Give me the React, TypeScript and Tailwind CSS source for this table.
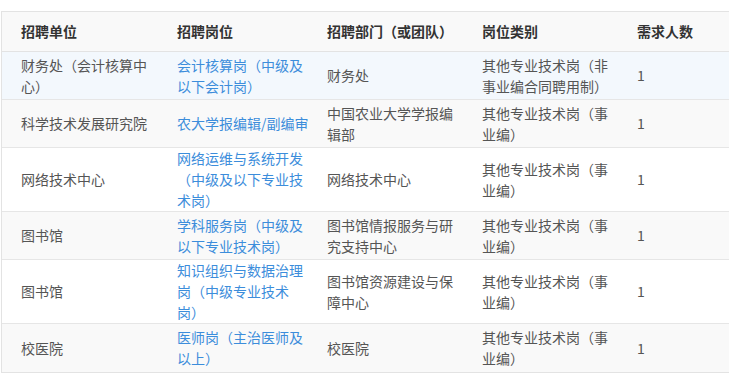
import React from 'react';

interface Job {
    unit: string;
    post: string;
    dept: string;
    kind: string;
    count: string;
    bg: string;
}

const jobs: Job[] = [
    { unit: '财务处（会计核算中心）', post: '会计核算岗（中级及以下会计岗）', dept: '财务处', kind: '其他专业技术岗（非事业编合同聘用制）', count: '1', bg: 'bg-[#f3f8fd]' },
    { unit: '科学技术发展研究院', post: '农大学报编辑/副编审', dept: '中国农业大学学报编辑部', kind: '其他专业技术岗（事业编）', count: '1', bg: 'bg-[#f9f9f9]' },
    { unit: '网络技术中心', post: '网络运维与系统开发（中级及以下专业技术岗）', dept: '网络技术中心', kind: '其他专业技术岗（事业编）', count: '1', bg: 'bg-white' },
    { unit: '图书馆', post: '学科服务岗（中级及以下专业技术岗）', dept: '图书馆情报服务与研究支持中心', kind: '其他专业技术岗（事业编）', count: '1', bg: 'bg-[#f9f9f9]' },
    { unit: '图书馆', post: '知识组织与数据治理岗（中级专业技术岗）', dept: '图书馆资源建设与保障中心', kind: '其他专业技术岗（事业编）', count: '1', bg: 'bg-white' },
    { unit: '校医院', post: '医师岗（主治医师及以上）', dept: '校医院', kind: '其他专业技术岗（事业编）', count: '1', bg: 'bg-[#f9f9f9]' },
];

const cols = 'grid grid-cols-[156px_150px_155px_155px_1fr]';
const cell = 'flex items-center pl-[19px]';

function Cell({ children, className = '' }: { children: React.ReactNode; className?: string }) {
    return (
        <div className={`${cell} ${className}`}>
            <div className="w-[134px] shrink-0">{children}</div>
        </div>
    );
}

export default function App() {
    return (
        <div className="w-[729px] h-[376px] overflow-hidden bg-white pt-[11px] pl-px font-['Microsoft_YaHei','Noto_Sans_CJK_SC',sans-serif] text-[14px] leading-[21px] [text-spacing-trim:space-all]">
            <div className="w-[800px] border-t border-l border-b border-[#e3e3e3]">
                <div className={`${cols} h-[40px] bg-[#f9f9f9] border-b border-[#e3e3e3] font-bold text-[#333]`}>
                    <Cell>招聘单位</Cell>
                    <Cell>招聘岗位</Cell>
                    <Cell>招聘部门（或团队）</Cell>
                    <Cell>岗位类别</Cell>
                    <Cell>需求人数</Cell>
                </div>

                {jobs.map((job, index) => (
                    <div
                        key={index}
                        className={`${cols} min-h-[48px] text-[#555] ${job.bg} ${index < jobs.length - 1 ? 'border-b border-[#e6e6e6]' : ''}`}
                    >
                        <Cell>{job.unit}</Cell>
                        <Cell className="text-[#3c8ddb]">{job.post}</Cell>
                        <Cell>{job.dept}</Cell>
                        <Cell>{job.kind}</Cell>
                        <Cell>{job.count}</Cell>
                    </div>
                ))}
            </div>
        </div>
    );
}
